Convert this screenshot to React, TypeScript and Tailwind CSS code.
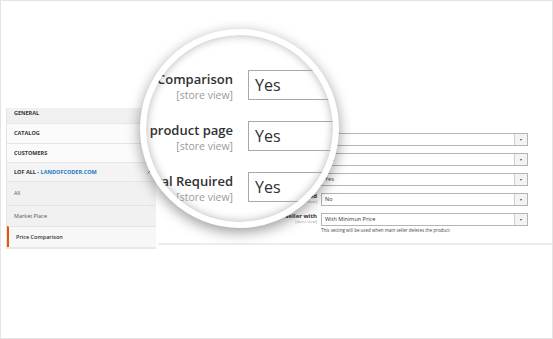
// 配置页放大镜示意图 —— Magento 风格后台。
const font = { fontFamily: '"Open Sans", "Liberation Sans", sans-serif' };

// 侧栏顶层分组
const groups = ['General', 'Catalog', 'Customers'];
const subItems = ['All', 'Market Place', 'Price Comparison'];

// 1x 表单行
const rows = [
  { label: 'Enable Price Comparison', value: 'Yes' },
  { label: 'Show on product page', value: 'Yes' },
  { label: 'Approval Required', value: 'Yes' },
  { label: 'Approval Required', value: 'No' },
  { label: 'Replace Seller with', value: 'With Minimun Price', note: 'This setting will be used when main seller deletes the product' },
];

// 放大后的三行
const bigRows = [
  { label: 'Enable Price Comparison', value: 'Yes' },
  { label: 'Display on product page', value: 'Yes' },
  { label: 'Approval Required', value: 'Yes' },
];

function Sidebar() {
  return (
    <div className="ml-[5px] w-[150px] border-l border-[#e3e3e3] text-[5.5px]">
      <div className="h-[15px] bg-[#f0f0f0] pl-[7px] pt-[2px] font-bold uppercase leading-[7px] text-[#333]">
        {groups[0]}
      </div>
      {groups.slice(1).map((g) => (
        <div key={g} className="flex h-[19.5px] items-center border-t border-[#e6e6e6] bg-[#fbfbfb] pl-[7px] font-bold uppercase text-[#333]">
          {g}
        </div>
      ))}
      <div className="flex h-[19px] items-center justify-between border-t border-[#e6e6e6] bg-[#f4f4f4] pl-[7px] pr-[6px] font-bold uppercase text-[#333]">
        <span>
          LOF ALL - <span className="text-[#1979c3]">Landofcoder.com</span>
        </span>
        <svg width="6" height="4" viewBox="0 0 6 4" className="mr-[-3px]">
          <path d="M0.5 3.5 L3 1 L5.5 3.5" fill="none" stroke="#666" strokeWidth="0.8" />
        </svg>
      </div>
      <div className="border-b-2 border-[#e8e8e8] bg-[#f1f1f1]">
        {subItems.map((s, i) => {
          const active = s === 'Price Comparison';
          return (
            <div
              key={s}
              className={
                'flex items-center border-t border-[#e4e4e4] pl-[7px] ' +
                (i === 0 ? 'h-[24px] ' : 'h-[21px] ') +
                (active ? 'border-l-2 border-l-[#eb5202] bg-[#f7f7f7] pl-[5px] text-[#333] font-semibold' : 'text-[#555]')
              }
            >
              {s}
            </div>
          );
        })}
      </div>
    </div>
  );
}

function SmallSelect({ value }: { value: string }) {
  return (
    <div className="flex h-[13px] w-[207px] items-center border border-[#b5b5b5] bg-white">
      <span className="flex-1 pl-[3px] text-[5.5px] text-[#333]">{value}</span>
      <span className="flex h-full w-[13px] items-center justify-center border-l border-[#cfcfcf] bg-[#f3f3f3]">
        <span className="h-0 w-0 border-x-[1.5px] border-t-[2px] border-x-transparent border-t-[#555]" />
      </span>
    </div>
  );
}

function MainForm() {
  return (
    <div className="ml-[2px] flex-1 border-b-2 border-[#ececec] pb-[10px] pt-[25px]">
      <div className="flex flex-col gap-[7px]">
        {rows.map((r, i) => (
          <div key={i} className="flex gap-[4px]">
            <div className="flex w-[159px] flex-col items-end leading-none">
              <span className="text-[6px] font-bold text-[#333]">{r.label}</span>
              <span className="mt-[1px] text-[4px] text-[#999]">[store view]</span>
            </div>
            <div>
              <SmallSelect value={r.value} />
              {r.note && <div className="mt-[2px] text-[4.5px] leading-none text-[#444]">{r.note}</div>}
            </div>
          </div>
        ))}
      </div>
    </div>
  );
}

function Magnifier() {
  return (
    <div className="absolute left-[139px] top-[28px] h-[199px] w-[199px] overflow-hidden rounded-full border-[6px] border-white bg-white shadow-[0_4px_14px_rgba(0,0,0,0.4),inset_0_0_10px_rgba(0,0,0,0.3)]">
      <div className="flex flex-col gap-[21px] pt-[35px]">
        {bigRows.map((r, i) => (
          <div key={i} className="flex h-[30px] gap-[15px]">
            <div className="flex w-[87px] shrink-0 flex-col items-end">
              <span className="whitespace-nowrap text-[13px] font-semibold leading-[19px] text-[#303030]">{r.label}</span>
              <span className="whitespace-nowrap text-[10.5px] leading-[12px] text-[#9a9a9a]">[store view]</span>
            </div>
            <div className="flex h-[30px] w-[300px] shrink-0 items-center border border-[#a8a8a8] pl-[6px] text-[16px] text-[#303030]">
              {r.value}
            </div>
          </div>
        ))}
      </div>
    </div>
  );
}

export default function App() {
  return (
    <div style={font} className="relative h-[339px] w-[553px] overflow-hidden border border-[#e4e4e4] bg-white">
      <div className="flex items-start pt-[107px]">
        <Sidebar />
        <MainForm />
      </div>
      <Magnifier />
    </div>
  );
}
